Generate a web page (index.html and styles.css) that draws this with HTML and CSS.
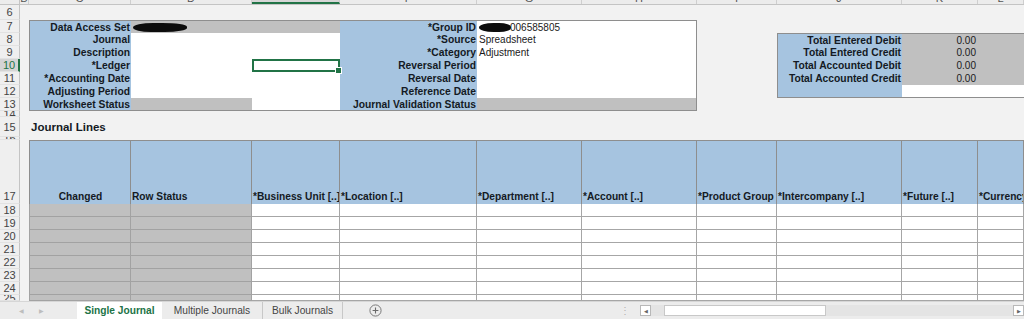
FILE: index.html
```html
<!DOCTYPE html>
<html>
<head>
<meta charset="utf-8">
<title>Journal Worksheet</title>
<link rel="stylesheet" href="styles.css">
</head>
<body>
<div class="app">
  <div class="sheet">
    <div class="row colhdr">
      <div class="corner"></div>
      <div class="ch">B</div><div class="ch">C</div><div class="ch">D</div><div class="ch sel">E</div><div class="ch">F</div><div class="ch">G</div><div class="ch">H</div><div class="ch">I</div><div class="ch">J</div><div class="ch">K</div><div class="ch">L</div>
    </div>
    <div class="row r6"><div class="rn">6</div></div>

    <div class="row">
      <div class="rn">7</div><div></div>
      <div class="lbl bt bl">Data Access Set</div>
      <div class="gray s2 bt"><span class="blob blob1"></span></div>
      <div class="lbl bt">*Group ID</div>
      <div class="val s2 bt br"><span class="blob blob2"></span>006585805</div>
    </div>
    <div class="row">
      <div class="rn">8</div><div></div>
      <div class="lbl bl">Journal</div>
      <div class="white s2"></div>
      <div class="lbl">*Source</div>
      <div class="val s2 br">Spreadsheet</div>
      <div></div>
      <div class="lbl bt bl">Total Entered Debit</div>
      <div class="num bt">0.00</div>
      <div class="gray bt"></div>
    </div>
    <div class="row">
      <div class="rn">9</div><div></div>
      <div class="lbl bl">Description</div>
      <div class="white s2"></div>
      <div class="lbl">*Category</div>
      <div class="val s2 br">Adjustment</div>
      <div></div>
      <div class="lbl bl">Total Entered Credit</div>
      <div class="num">0.00</div>
      <div class="gray"></div>
    </div>
    <div class="row">
      <div class="rn cur">10</div><div></div>
      <div class="lbl bl">*Ledger</div>
      <div class="white"></div>
      <div class="white selcell"></div>
      <div class="lbl">Reversal Period</div>
      <div class="val s2 br"></div>
      <div></div>
      <div class="lbl bl">Total Accounted Debit</div>
      <div class="num">0.00</div>
      <div class="gray"></div>
    </div>
    <div class="row">
      <div class="rn">11</div><div></div>
      <div class="lbl bl">*Accounting Date</div>
      <div class="white s2"></div>
      <div class="lbl">Reversal Date</div>
      <div class="val s2 br"></div>
      <div></div>
      <div class="lbl bl">Total Accounted Credit</div>
      <div class="num">0.00</div>
      <div class="gray"></div>
    </div>
    <div class="row">
      <div class="rn">12</div><div></div>
      <div class="lbl bl">Adjusting Period</div>
      <div class="white s2"></div>
      <div class="lbl">Reference Date</div>
      <div class="val s2 br"></div>
      <div></div>
      <div class="lbl bl bb"></div>
      <div class="white bb"></div>
      <div class="white bb"></div>
    </div>
    <div class="row">
      <div class="rn">13</div><div></div>
      <div class="lbl bl bb">Worksheet Status</div>
      <div class="gray bb"></div>
      <div class="white bb"></div>
      <div class="lbl bb">Journal Validation Status</div>
      <div class="gray s2 bb br"></div>
    </div>
    <div class="row r14"><div class="rn">14</div></div>
    <div class="row r15"><div class="rn">15</div><div></div><div class="title s3">Journal Lines</div></div>
    <div class="row r16"><div class="rn">16</div></div>

    <div class="row r17">
      <div class="rn">17</div><div></div>
      <div class="hd hdfirst center">Changed</div>
      <div class="hd">Row Status</div>
      <div class="hd">*Business Unit [..]</div>
      <div class="hd">*Location [..]</div>
      <div class="hd">*Department [..]</div>
      <div class="hd">*Account [..]</div>
      <div class="hd">*Product Group</div>
      <div class="hd">*Intercompany [..]</div>
      <div class="hd">*Future [..]</div>
      <div class="hd">*Currency [..]</div>
    </div>

    <div class="row line"><div class="rn">18</div><div></div><div class="g"></div><div class="g"></div><div class="w"></div><div class="w"></div><div class="w"></div><div class="w"></div><div class="w"></div><div class="w"></div><div class="w"></div><div class="w"></div></div>
    <div class="row line"><div class="rn">19</div><div></div><div class="g"></div><div class="g"></div><div class="w"></div><div class="w"></div><div class="w"></div><div class="w"></div><div class="w"></div><div class="w"></div><div class="w"></div><div class="w"></div></div>
    <div class="row line"><div class="rn">20</div><div></div><div class="g"></div><div class="g"></div><div class="w"></div><div class="w"></div><div class="w"></div><div class="w"></div><div class="w"></div><div class="w"></div><div class="w"></div><div class="w"></div></div>
    <div class="row line"><div class="rn">21</div><div></div><div class="g"></div><div class="g"></div><div class="w"></div><div class="w"></div><div class="w"></div><div class="w"></div><div class="w"></div><div class="w"></div><div class="w"></div><div class="w"></div></div>
    <div class="row line"><div class="rn">22</div><div></div><div class="g"></div><div class="g"></div><div class="w"></div><div class="w"></div><div class="w"></div><div class="w"></div><div class="w"></div><div class="w"></div><div class="w"></div><div class="w"></div></div>
    <div class="row line"><div class="rn">23</div><div></div><div class="g"></div><div class="g"></div><div class="w"></div><div class="w"></div><div class="w"></div><div class="w"></div><div class="w"></div><div class="w"></div><div class="w"></div><div class="w"></div></div>
    <div class="row line"><div class="rn">24</div><div></div><div class="g"></div><div class="g"></div><div class="w"></div><div class="w"></div><div class="w"></div><div class="w"></div><div class="w"></div><div class="w"></div><div class="w"></div><div class="w"></div></div>
    <div class="row line r25"><div class="rn">25</div><div></div><div class="g"></div><div class="g"></div><div class="w"></div><div class="w"></div><div class="w"></div><div class="w"></div><div class="w"></div><div class="w"></div><div class="w"></div><div class="w"></div></div>
  </div>

  <div class="tabbar">
    <div class="nav"><span class="arr">&#9664;</span><span class="arr">&#9654;</span></div>
    <div class="tab active">Single Journal</div>
    <div class="tab t2">Multiple Journals</div>
    <div class="tab t3">Bulk Journals</div>
    <div class="add">
      <svg width="13" height="13" viewBox="0 0 13 13"><circle cx="6.5" cy="6.5" r="5.6" fill="none" stroke="#7a7a7a" stroke-width="1"/><path d="M6.5 3.6v5.8M3.6 6.5h5.8" stroke="#6a6a6a" stroke-width="1.1"/></svg>
    </div>
    <div class="spacer"></div>
    <div class="grip">&#8942;</div>
    <div class="hscroll">
      <div class="sbtn">&#9664;</div>
      <div class="track"><div class="thumb"></div></div>
      <div class="sbtn">&#9654;</div>
    </div>
  </div>
</div>
</body>
</html>
```

FILE: styles.css
```css
* { box-sizing: border-box; }
html, body { margin: 0; padding: 0; }
body {
  width: 1024px;
  height: 319px;
  overflow: hidden;
  background: #f2f2f2;
  font-family: "Liberation Sans", Arial, sans-serif;
  color: #1a1a1a;
}
.app { display: flex; flex-direction: column; height: 319px; }
.sheet { flex: 0 0 301px; overflow: hidden; background: #f2f2f2; }

.row {
  display: grid;
  grid-template-columns: 20px 9px 102px 121px 88px 137px 105px 115px 80px 125px 76px 1fr;
  height: 13px;
}
.row > div { min-width: 0; overflow: hidden; white-space: nowrap; }
.s2 { grid-column: span 2; }
.s3 { grid-column: span 3; }

/* column header strip */
.colhdr { height: 5px; background: #ececec; border-bottom: 1px solid #c4c4c4; }
.corner { border-right: 1px solid #c4c4c4; }
.ch {
  display: flex; align-items: flex-end; justify-content: center;
  font-size: 11px; line-height: 12px; color: #555;
  border-right: 1px solid #cfcfcf;
}
.ch.sel { background: #d6d6d6; border-bottom: 2px solid #217346; color: #217346; }

/* row numbers */
.rn {
  display: flex; align-items: center; justify-content: center;
  background: #efefef; border-right: 1px solid #c4c4c4; border-bottom: 1px solid #e2e2e2;
  font-size: 11px; color: #444;
}
.rn.cur { background: #d4d4d4; color: #217346; border-right: 2px solid #217346; }
.r6 { height: 15px; }
.r14 { height: 6px; }
.r15 { height: 20px; }
.r16 { height: 3px; }
.r17 { height: 64px; }
.r25 { height: 6px; }
.r14 .rn, .r25 .rn { align-items: flex-start; line-height: 6px; }
.r16 .rn { align-items: flex-start; line-height: 3px; }
.r17 .rn { align-items: flex-end; padding-bottom: 1px; }

/* form block */
.lbl {
  display: flex; align-items: center; justify-content: flex-end;
  background: #a6c4e0; padding-right: 1px;
  font-weight: bold; font-size: 10.3px; color: #141a24;
}
.gray { background: #c0c0c0; }
.white { background: #ffffff; }
.val {
  display: flex; align-items: center;
  background: #ffffff; padding-left: 2px; font-size: 10px; color: #1a1a1a;
}
.gray.s2 { display: flex; align-items: center; padding-left: 2px; }
.num {
  display: flex; align-items: center; justify-content: flex-end;
  background: #c0c0c0; padding-right: 2px; font-size: 10px; color: #1a1a1a;
}
.bt { border-top: 1px solid #8e8e8e; }
.bb { border-bottom: 1px solid #8e8e8e; }
.bl { border-left: 1px solid #8e8e8e; }
.br { border-right: 1px solid #8e8e8e; }

.selcell { position: relative; overflow: visible !important; border: 2px solid #217346; z-index: 2; }
.selcell::after {
  content: ""; position: absolute; right: -4px; bottom: -4px;
  width: 5px; height: 5px; background: #217346; border: 1px solid #fff;
}

.blob { display: inline-block; background: #0c0c0c; }
.blob1 { width: 54px; height: 9px; border-radius: 45% 55% 50% 40% / 60% 50% 55% 60%; margin-top: 1px; }
.blob2 { width: 32px; height: 9px; border-radius: 50% 40% 40% 50% / 55% 50% 50% 55%; margin-right: -1px; }

.title {
  display: flex; align-items: center; padding-left: 2px;
  font-weight: bold; font-size: 11.5px; color: #141a24;
}

/* table header */
.hd {
  display: flex; align-items: flex-end;
  background: #a6c4e0; border-top: 1px solid #8e8e8e; border-right: 1px solid #8e8e8e;
  padding: 0 0 1px 1px; line-height: 13px;
  font-weight: bold; font-size: 10.2px; color: #141a24;
}
.hdfirst { border-left: 1px solid #8e8e8e; }
.hd.center { justify-content: center; }

/* data lines */
.line .g { background: #c0c0c0; border-right: 1px solid #a2a2a2; border-bottom: 1px solid #a2a2a2; }
.line .g:nth-child(3) { border-left: 1px solid #a2a2a2; }
.line .w { background: #ffffff; border-right: 1px solid #a6a6a6; border-bottom: 1px solid #a6a6a6; }

/* tab bar */
.tabbar {
  flex: 0 0 18px; display: flex; align-items: stretch;
  background: #ececec; border-top: 1px solid #d6d6d6;
  font-size: 10.2px; color: #444;
}
.nav { width: 77px; display: flex; align-items: center; padding-left: 19px; gap: 15px; }
.arr { font-size: 6px; color: #bdbdbd; }
.tab { display: flex; align-items: center; justify-content: center; border-right: 1px solid #c8c8c8; }
.tab.active { width: 85px; background: #ffffff; color: #217346; font-weight: bold; border-right: none; }
.tab.t2 { width: 101px; }
.tab.t3 { width: 80px; }
.add { display: flex; align-items: center; margin-left: 26px; }
.spacer { flex: 1; }
.grip { display: flex; align-items: center; color: #b0b0b0; font-size: 10px; margin-right: 10px; }
.hscroll { width: 384px; display: flex; align-items: center; gap: 0; }
.sbtn {
  width: 11px; height: 11px; background: #fff; border: 1px solid #b8b8b8;
  font-size: 5px; color: #666; display: flex; align-items: center; justify-content: center;
}
.track { flex: 1; height: 11px; background: #e4e4e4; display: flex; padding-left: 13px; }
.thumb { width: 162px; height: 11px; background: #fff; border: 1px solid #c8c8c8; }
```
